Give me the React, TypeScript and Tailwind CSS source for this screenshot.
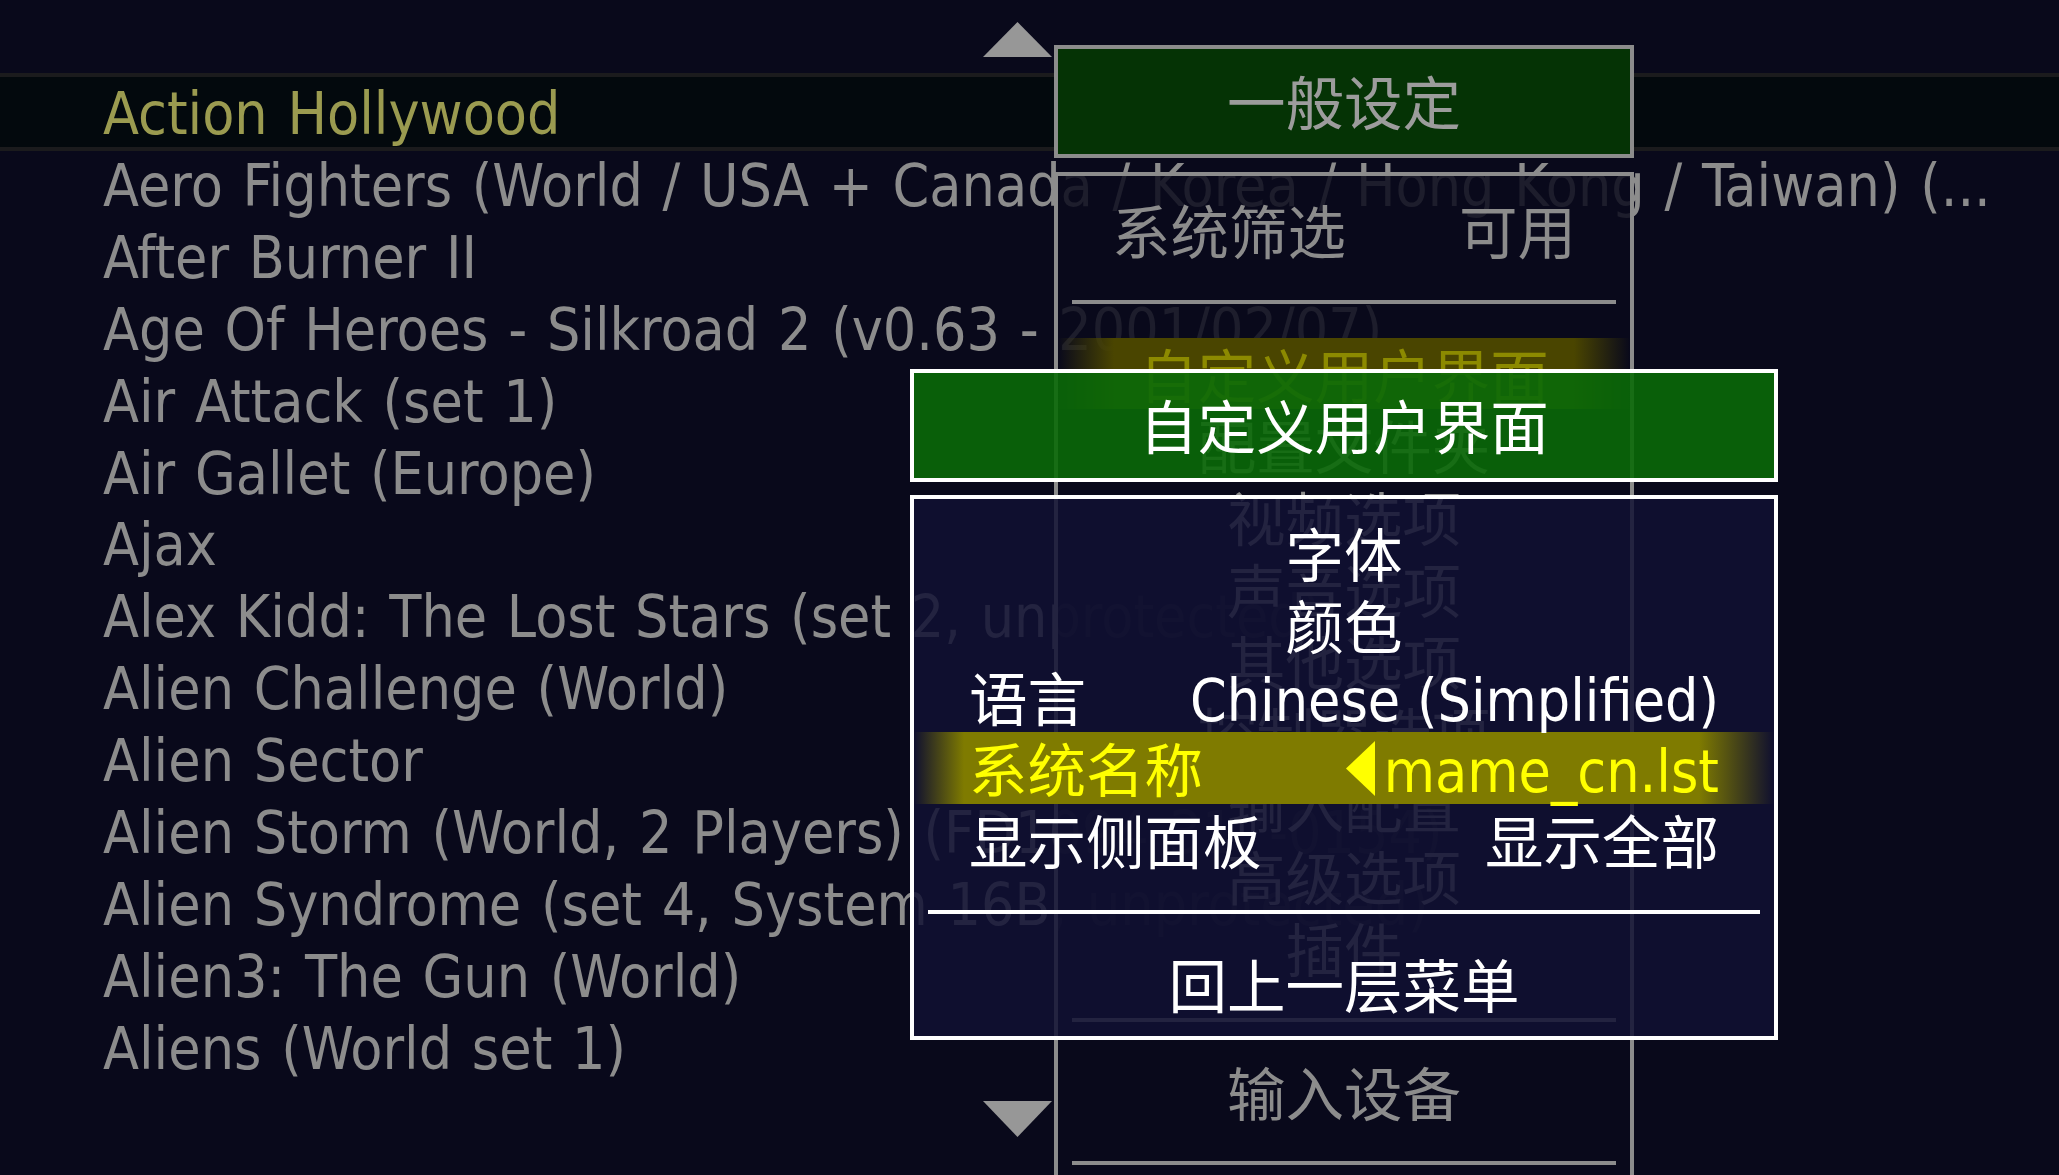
import React from "react";

const FONT =
  "font-[family-name:'DejaVu_Sans_Condensed','Liberation_Sans','Noto_Sans_CJK_SC',sans-serif]";

const games = [
  "Aero Fighters (World / USA + Canada / Korea / Hong Kong / Taiwan) (...",
  "After Burner II",
  "Age Of Heroes - Silkroad 2 (v0.63 - 2001/02/07)",
  "Air Attack (set 1)",
  "Air Gallet (Europe)",
  "Ajax",
  "Alex Kidd: The Lost Stars (set 2, unprotected)",
  "Alien Challenge (World)",
  "Alien Sector",
  "Alien Storm (World, 2 Players) (FD1094 317-0154)",
  "Alien Syndrome (set 4, System 16B, unprotected)",
  "Alien3: The Gun (World)",
  "Aliens (World set 1)",
];

const parentItems = [
  "配置文件夹",
  "视频选项",
  "声音选项",
  "其他选项",
  "控制器选项",
  "输入配置",
  "高级选项",
  "插件",
];

function Row({ children, className = "" }: { children: React.ReactNode; className?: string }) {
  return (
    <div
      className={`flex h-[71.8px] items-start pt-[5px] leading-[71.8px] whitespace-nowrap ${className}`}
    >
      {children}
    </div>
  );
}

function Sep({ color }: { color: string }) {
  return (
    <div className="flex h-[71.8px] items-center px-[14px]">
      <div className={`h-[4px] w-full ${color}`} />
    </div>
  );
}

export default function App() {
  return (
    <div
      className={`relative h-[1175px] w-[2059px] overflow-hidden bg-[#09091b] text-[58.5px] ${FONT}`}
    >
      {/* game list */}
      <div className="pt-[73px] [word-spacing:3px]">
        <div className="h-[78px] whitespace-nowrap border-y-4 border-[#1b1b1d] bg-[#03090d] pl-[103px] pt-[1px] leading-[72px] text-[#9b9b50]">
          Action Hollywood
        </div>
        {games.map((g) => (
          <div
            key={g}
            className="h-[71.9px] whitespace-nowrap pl-[103px] leading-[71.9px] text-[#8c8c8c]"
          >
            {g}
          </div>
        ))}
      </div>

      {/* scroll arrows */}
      <svg className="absolute left-[983px] top-[22px]" width="69" height="35" viewBox="0 0 69 35">
        <polygon points="34.5,0 69,35 0,35" fill="#979797" />
      </svg>
      <svg className="absolute left-[983px] top-[1101px]" width="69" height="36" viewBox="0 0 69 36">
        <polygon points="0,0 69,0 34.5,36" fill="#979797" />
      </svg>

      {/* parent menu: 一般设定 */}
      <div className="absolute left-[1054px] top-[45px] w-[580px]">
        <div className="flex h-[113px] items-center justify-center border-4 border-[#8c8c8c] bg-[#053305] pt-[9px] text-[#9c9c9c]">
          一般设定
        </div>
        <div className="mt-[14px] h-[1100px] border-4 border-[#8c8c8c] bg-[#09091bd9] pt-[18px] text-[#8c8c8c]">
          <Row className="justify-between px-[54px]">
            <span>系统筛选</span>
            <span>可用</span>
          </Row>
          <Sep color="bg-[#8c8c8c]" />
          <Row className="justify-center bg-[linear-gradient(to_right,transparent,#4a4500_56px,#4a4500_calc(100%_-_56px),transparent)] text-[#8c8a00]">
            自定义用户界面
          </Row>
          {parentItems.map((p) => (
            <Row key={p} className="justify-center">
              {p}
            </Row>
          ))}
          <Sep color="bg-[#8c8c8c]" />
          <Row className="justify-center">输入设备</Row>
          <Sep color="bg-[#8c8c8c]" />
        </div>
      </div>

      {/* front dialog: 自定义用户界面 */}
      <div className="absolute left-[910px] top-[369px] w-[868px]">
        <div className="flex h-[113px] items-center justify-center border-4 border-white bg-[#0a6908e6] pt-[9px] text-white">
          自定义用户界面
        </div>
        <div className="mt-[13px] border-4 border-white bg-[#111132d9] pb-[16px] pt-[18px] text-white">
          <Row className="justify-center">字体</Row>
          <Row className="justify-center">颜色</Row>
          <Row className="justify-between px-[55px]">
            <span>语言</span>
            <span>Chinese (Simplified)</span>
          </Row>
          <Row className="justify-between bg-[linear-gradient(to_right,transparent,#7f7b00_50px,#7f7b00_calc(100%_-_75px),transparent)] px-[55px] text-[#ffff00]">
            <span>系统名称</span>
            <span className="flex h-[71.8px] items-center">
              <svg className="mr-[9px] -mt-[10px]" width="29" height="55" viewBox="0 0 29 55">
                <polygon points="0,27.5 29,0 29,55" fill="#ffff00" />
              </svg>
              <span>mame_cn.lst</span>
            </span>
          </Row>
          <Row className="justify-between px-[55px]">
            <span>显示侧面板</span>
            <span>显示全部</span>
          </Row>
          <Sep color="bg-white" />
          <Row className="justify-center">回上一层菜单</Row>
        </div>
      </div>
    </div>
  );
}
